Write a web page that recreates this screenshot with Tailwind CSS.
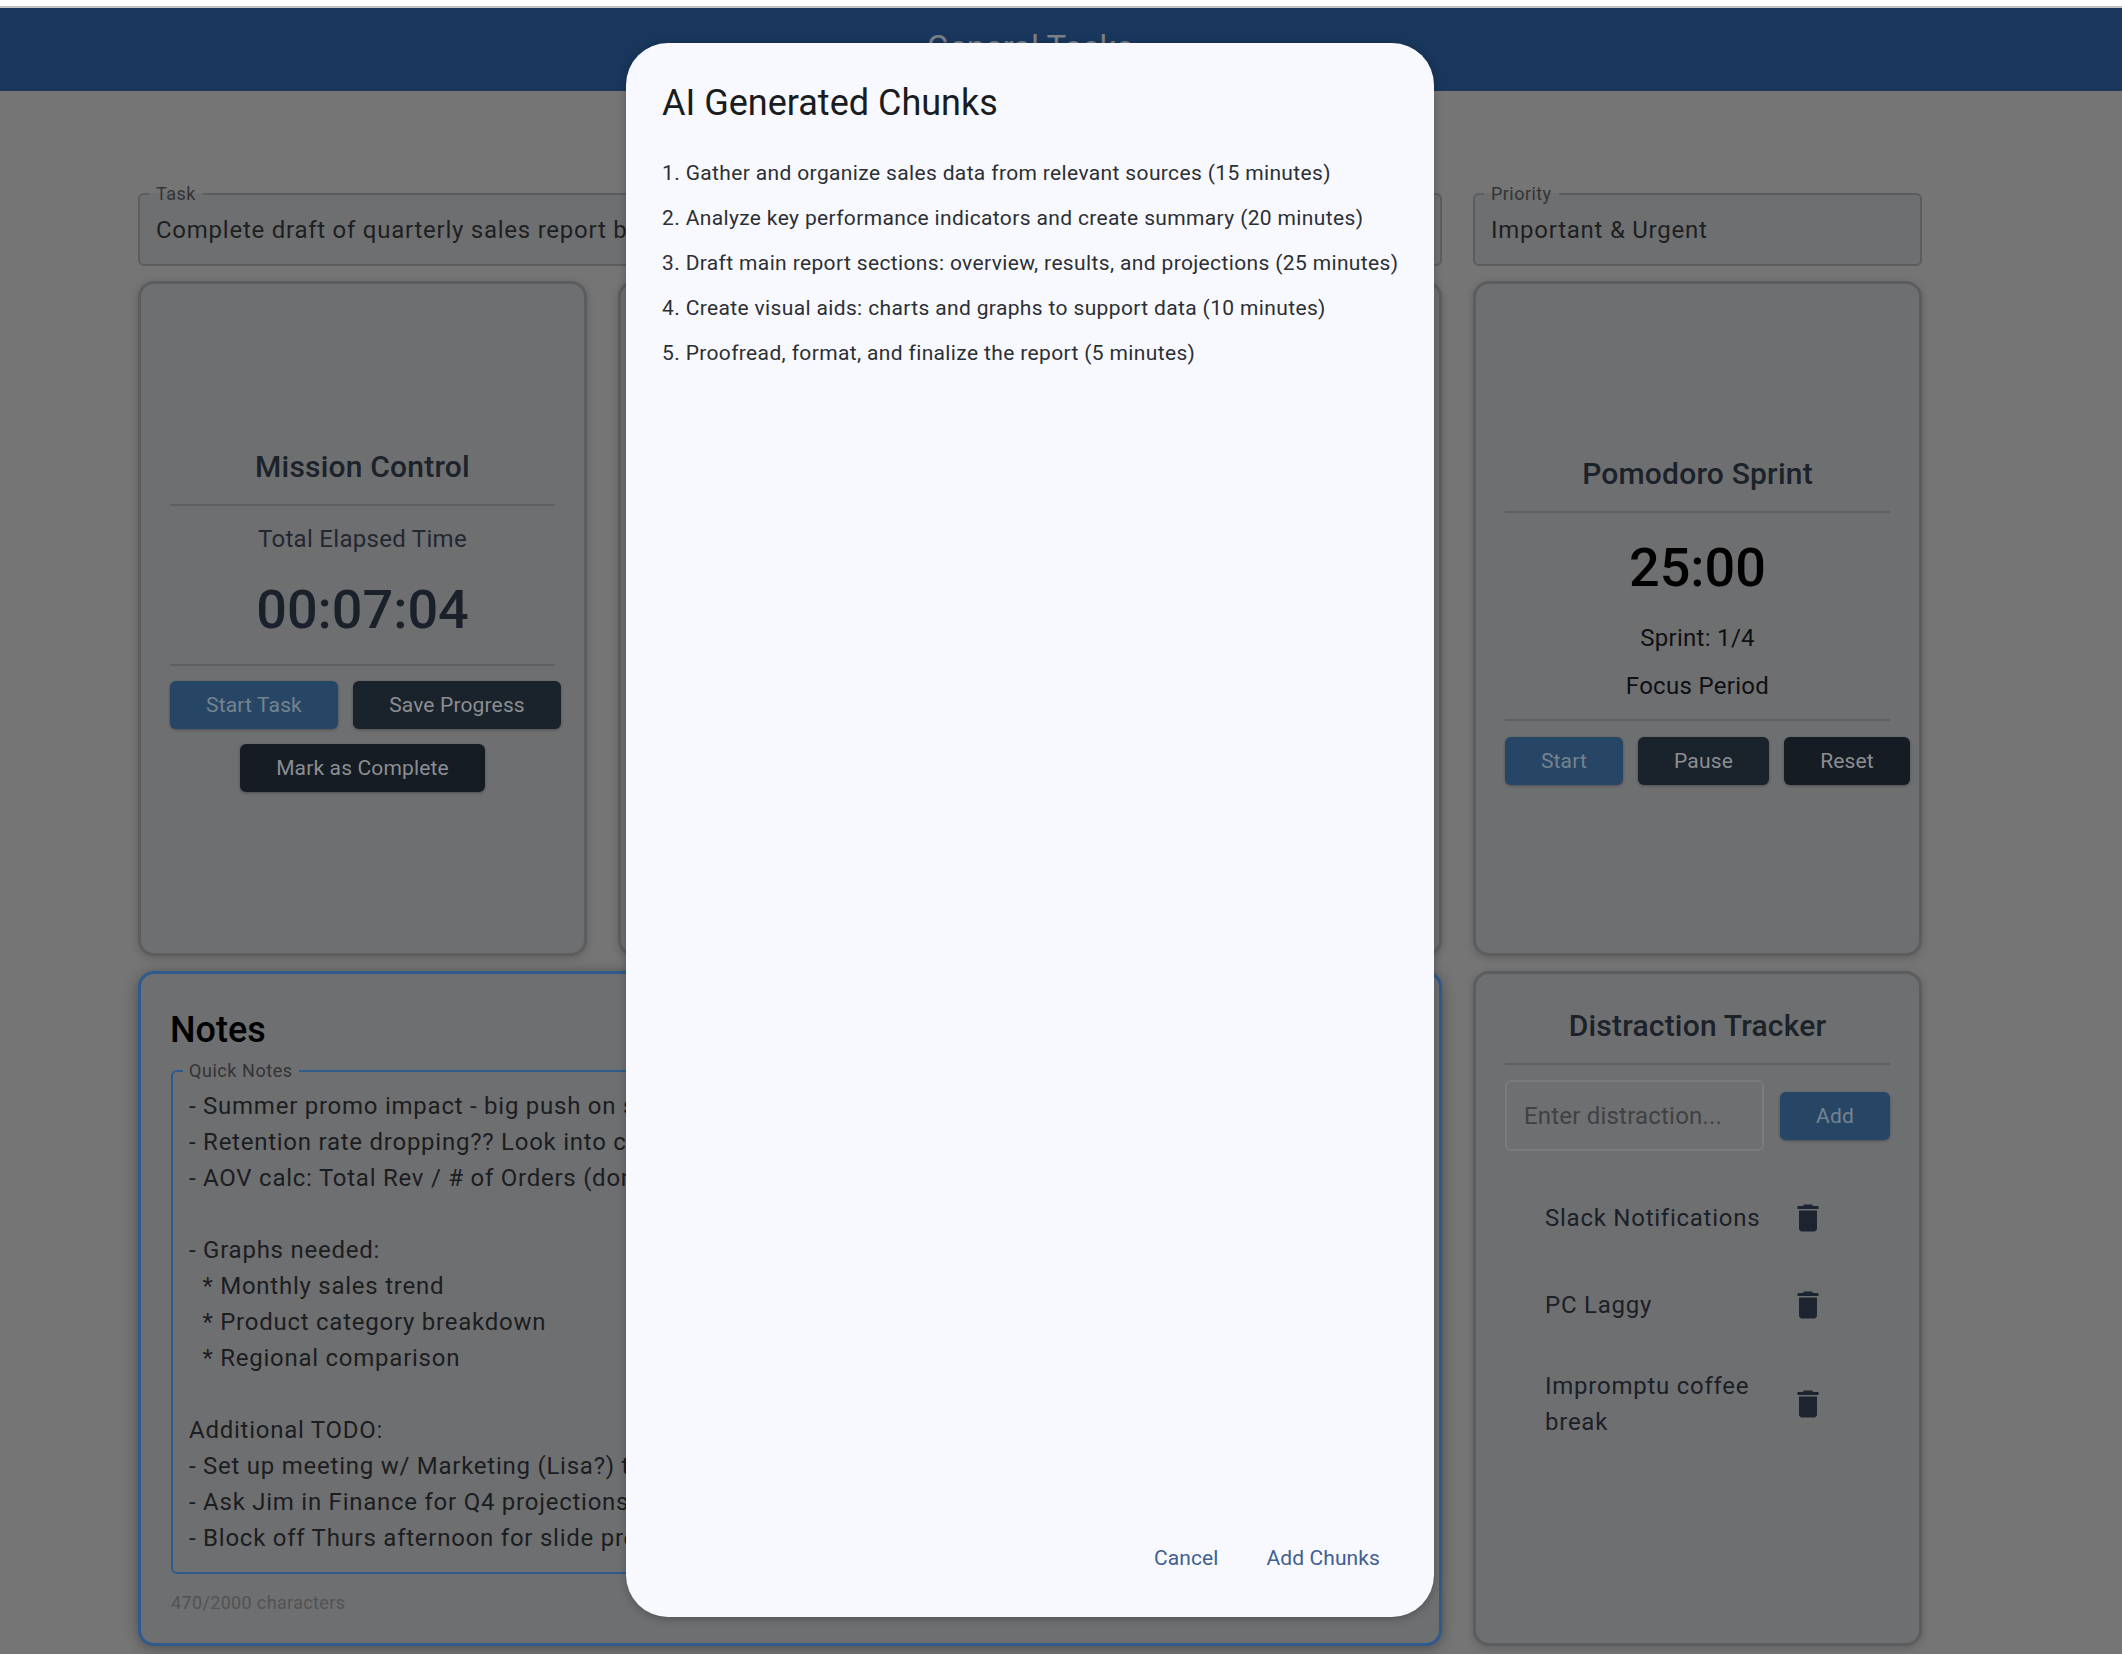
<!DOCTYPE html>
<html lang="en">
<head>
<meta charset="utf-8">
<title>General Tasks</title>
<script src="https://cdn.jsdelivr.net/npm/@tailwindcss/browser@4"></script>
</head>
<body class="bg-white font-['Roboto',sans-serif]">
<div class="relative w-[2122px] h-[1654px] overflow-hidden">
    <div class="h-[6px] bg-white"></div>
    <div class="h-[2px] bg-[#c4c4c4]"></div>

    <!-- Dimmed page -->
    <div class="h-[1646px] bg-[#757575]">
        <header class="h-[83px] bg-[#19365c] pl-[138px] pr-[200px] flex items-center justify-center">
            <span class="text-[33px] leading-[44px] mb-[4px] text-[#7b8087]">General Tasks</span>
        </header>

        <main class="pl-[138px] pt-[91px] grid grid-cols-[449px_824px_449px] grid-rows-[84px_675px_675px] gap-x-[31px] gap-y-[15px]">
            <!-- Task -->
            <fieldset class="col-span-2 border-2 border-[#5c5d5f] rounded-[6px] bg-[#6e6f71] px-[16px] pt-[6px]">
                <legend class="-ml-[7px] px-[7px] text-[18px] leading-[24px] tracking-[.45px] text-[#333436]">Task</legend>
                <div class="text-[24px] leading-[36px] tracking-[.75px] text-[#1e1f21] whitespace-nowrap">Complete draft of quarterly sales report by Friday</div>
            </fieldset>
            <fieldset class="border-2 border-[#5c5d5f] rounded-[6px] bg-[#6e6f71] px-[16px] pt-[6px]">
                <legend class="-ml-[7px] px-[7px] text-[18px] leading-[24px] tracking-[.45px] text-[#333436]">Priority</legend>
                <div class="text-[24px] leading-[36px] tracking-[.75px] text-[#1e1f21]">Important &amp; Urgent</div>
            </fieldset>

            <!-- Mission Control -->
            <section class="border-[3px] border-[#5c5d5f] rounded-[16px] bg-[#6e6f71] shadow-[0_2px_8px_rgba(0,0,0,0.18)] px-[29px] pt-[163px] flex flex-col">
                <h2 class="text-[30px] leading-[40px] font-medium tracking-[.2px] text-center text-[#1c2229]">Mission Control</h2>
                <div class="mt-[17px] h-[2px] bg-[#5f6062]"></div>
                <div class="mt-[15px] text-[24px] leading-[36px] tracking-[.3px] text-center text-[#232830]">Total Elapsed Time</div>
                <div class="mt-[21px] text-[54px] leading-[64px] font-medium text-center text-[#1a212b]">00:07:04</div>
                <div class="mt-[22px] h-[2px] bg-[#5f6062]"></div>
                <div class="mt-[15px] flex gap-[15px]">
                    <button class="w-[168px] h-[48px] pt-[2px] shrink-0 rounded-[6px] bg-[#274666] text-[21px] tracking-[.15px] text-[#75838f] shadow-[0_1px_3px_rgba(0,0,0,0.3)]">Start Task</button>
                    <button class="w-[208px] h-[48px] pt-[2px] shrink-0 rounded-[6px] bg-[#1a222c] text-[21px] tracking-[.15px] text-[#8b8e92] shadow-[0_1px_3px_rgba(0,0,0,0.3)]">Save Progress</button>
                </div>
                <div class="mt-[15px] flex justify-center">
                    <button class="w-[245px] h-[48px] pt-[2px] rounded-[6px] bg-[#151c24] text-[21px] tracking-[.15px] text-[#8b8e92] shadow-[0_1px_3px_rgba(0,0,0,0.3)]">Mark as Complete</button>
                </div>
            </section>

            <!-- Middle card, behind the dialog -->
            <section class="border-[3px] border-[#5c5d5f] rounded-[16px] bg-[#6e6f71] shadow-[0_2px_8px_rgba(0,0,0,0.18)]"></section>

            <!-- Pomodoro Sprint -->
            <section class="border-[3px] border-[#5c5d5f] rounded-[16px] bg-[#6e6f71] shadow-[0_2px_8px_rgba(0,0,0,0.18)] px-[29px] pt-[170px] flex flex-col">
                <h2 class="text-[30px] leading-[40px] font-medium tracking-[.2px] text-center text-[#1c2229]">Pomodoro Sprint</h2>
                <div class="mt-[17px] h-[2px] bg-[#5f6062]"></div>
                <div class="mt-[23px] text-[54px] leading-[64px] font-medium text-center text-black">25:00</div>
                <div class="mt-[20px] text-[24px] leading-[36px] tracking-[.3px] text-center text-[#0f1011]">Sprint: 1/4</div>
                <div class="mt-[12px] text-[24px] leading-[36px] tracking-[.3px] text-center text-[#0f1011]">Focus Period</div>
                <div class="mt-[15px] h-[2px] bg-[#5f6062]"></div>
                <div class="mt-[16px] flex gap-[15px]">
                    <button class="w-[118px] h-[48px] pt-[2px] shrink-0 rounded-[6px] bg-[#274666] text-[21px] tracking-[.15px] text-[#75838f] shadow-[0_1px_3px_rgba(0,0,0,0.3)]">Start</button>
                    <button class="w-[131px] h-[48px] pt-[2px] shrink-0 rounded-[6px] bg-[#1a222c] text-[21px] tracking-[.15px] text-[#8b8e92] shadow-[0_1px_3px_rgba(0,0,0,0.3)]">Pause</button>
                    <button class="w-[126px] h-[48px] pt-[2px] shrink-0 rounded-[6px] bg-[#151c24] text-[21px] tracking-[.15px] text-[#8b8e92] shadow-[0_1px_3px_rgba(0,0,0,0.3)]">Reset</button>
                </div>
            </section>

            <!-- Notes -->
            <section class="col-span-2 border-[3px] border-[#2e5a8e] rounded-[16px] bg-[#6e6f71] shadow-[0_2px_14px_rgba(0,0,0,0.35)] px-[30px] pt-[32px]">
                <h2 class="-ml-px text-[36px] leading-[48px] font-medium text-black">Notes</h2>
                <fieldset class="mt-[5px] h-[515px] border-2 border-[#2e5a8e] rounded-[6px] px-[16px] pt-[5px]">
                    <legend class="-ml-[6px] px-[6px] text-[18px] leading-[24px] tracking-[.55px] text-[#333436]">Quick Notes</legend>
                    <div class="whitespace-pre text-[24px] leading-[36px] tracking-[.75px] text-[#1c1d1f]">- Summer promo impact - big push on social
- Retention rate dropping?? Look into churn
- AOV calc: Total Rev / # of Orders (done)

- Graphs needed:
  * Monthly sales trend
  * Product category breakdown
  * Regional comparison

Additional TODO:
- Set up meeting w/ Marketing (Lisa?) to review
- Ask Jim in Finance for Q4 projections
- Block off Thurs afternoon for slide prep</div>
                </fieldset>
                <div class="mt-[17px] text-[18px] leading-[24px] tracking-[.35px] text-[#525355]">470/2000 characters</div>
            </section>

            <!-- Distraction Tracker -->
            <section class="border-[3px] border-[#5c5d5f] rounded-[16px] bg-[#6e6f71] shadow-[0_2px_8px_rgba(0,0,0,0.18)] px-[29px] pt-[32px]">
                <h2 class="text-[30px] leading-[40px] font-medium tracking-[.2px] text-center text-[#1c2229]">Distraction Tracker</h2>
                <div class="mt-[17px] h-[2px] bg-[#5f6062]"></div>
                <div class="mt-[15px] flex items-center gap-[16px]">
                    <div class="w-[259px] h-[71px] shrink-0 border-2 border-[#7a7b7d] rounded-[6px] pl-[17px] flex items-center text-[24px] tracking-[.2px] text-[#404143]">Enter distraction...</div>
                    <button class="w-[110px] h-[48px] pt-[2px] shrink-0 rounded-[6px] bg-[#274666] text-[21px] tracking-[.15px] text-[#75838f] shadow-[0_1px_3px_rgba(0,0,0,0.3)]">Add</button>
                </div>
                <ul class="mt-[23px]">
                    <li class="h-[87px] pl-[40px] flex items-center">
                        <span class="w-[225px] text-[24px] leading-[36px] tracking-[.75px] text-[#1b2027]">Slack Notifications</span>
                        <svg class="ml-[20px] w-[36px] h-[36px]" viewBox="0 0 24 24" fill="#1c2430"><path d="M6 19c0 1.1.9 2 2 2h8c1.1 0 2-.9 2-2V7H6v12zM19 4h-3.5l-1-1h-5l-1 1H5v2h14V4z"/></svg>
                    </li>
                    <li class="h-[87px] pl-[40px] flex items-center">
                        <span class="w-[225px] text-[24px] leading-[36px] tracking-[.75px] text-[#1b2027]">PC Laggy</span>
                        <svg class="ml-[20px] w-[36px] h-[36px]" viewBox="0 0 24 24" fill="#1c2430"><path d="M6 19c0 1.1.9 2 2 2h8c1.1 0 2-.9 2-2V7H6v12zM19 4h-3.5l-1-1h-5l-1 1H5v2h14V4z"/></svg>
                    </li>
                    <li class="h-[111px] pl-[40px] flex items-center">
                        <span class="w-[225px] text-[24px] leading-[36px] tracking-[.75px] text-[#1b2027]">Impromptu coffee break</span>
                        <svg class="ml-[20px] w-[36px] h-[36px]" viewBox="0 0 24 24" fill="#1c2430"><path d="M6 19c0 1.1.9 2 2 2h8c1.1 0 2-.9 2-2V7H6v12zM19 4h-3.5l-1-1h-5l-1 1H5v2h14V4z"/></svg>
                    </li>
                </ul>
            </section>
        </main>
    </div>

    <!-- AI chunks dialog -->
    <div class="absolute left-[626px] top-[43px] w-[808px] h-[1574px] rounded-[42px] bg-[#f8f9ff] shadow-[0_2px_8px_rgba(0,0,0,0.25)] pl-[36px] pr-[35px] pt-[36px] pb-[28px] flex flex-col">
        <h1 class="text-[36px] leading-[48px] text-[#191c20]">AI Generated Chunks</h1>
        <ol class="mt-[24px] flex-1 text-[21px] leading-[45px] tracking-[.36px] text-[#2c2f33] whitespace-nowrap">
            <li>1. Gather and organize sales data from relevant sources (15 minutes)</li>
            <li>2. Analyze key performance indicators and create summary (20 minutes)</li>
            <li>3. Draft main report sections: overview, results, and projections (25 minutes)</li>
            <li>4. Create visual aids: charts and graphs to support data (10 minutes)</li>
            <li>5. Proofread, format, and finalize the report (5 minutes)</li>
        </ol>
        <div class="flex justify-end gap-[10px]">
            <button class="h-[60px] px-[19px] text-[21px] tracking-[.1px] text-[#415f8f]">Cancel</button>
            <button class="h-[60px] px-[19px] text-[21px] tracking-[.1px] text-[#415f8f]">Add Chunks</button>
        </div>
    </div>
</div>
</body>
</html>
